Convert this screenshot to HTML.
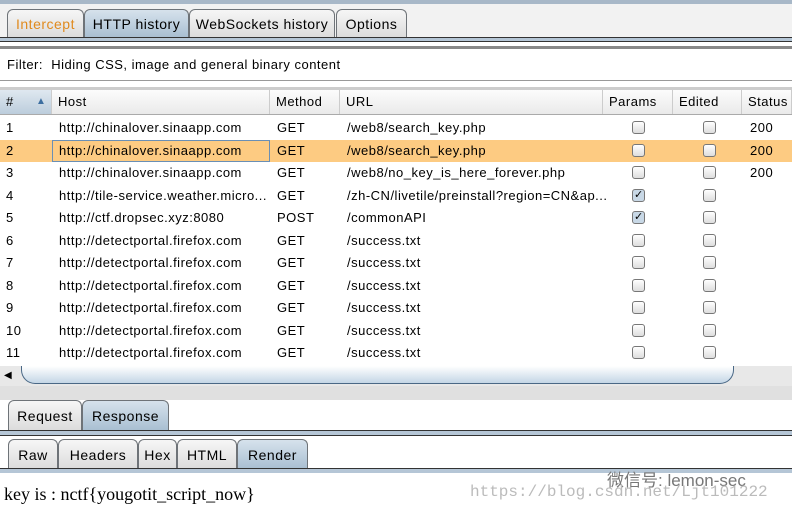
<!DOCTYPE html><html><head><style>
body{margin:0;width:792px;height:512px;background:#fff;font-family:"Liberation Sans",sans-serif;font-size:13px;letter-spacing:0.5px;color:#000;position:relative;overflow:hidden}
.a{position:absolute}
.tab{position:absolute;top:9px;height:28px;border:1px solid #6e7378;border-bottom:none;border-radius:6px 6px 0 0;background:linear-gradient(#f6f6f6,#dcdcdc);line-height:29px;text-align:center;font-size:14px;box-sizing:border-box}
.sel{background:linear-gradient(#d6e2ec,#a9bfd2)}
.row{position:absolute;left:0;width:792px;height:22px;line-height:22px}
.row span{position:absolute;white-space:nowrap}
.cb{position:absolute;width:11px;height:11px;border:1px solid #777;border-radius:3px;background:linear-gradient(#fff,#ddd);top:4px}
.hd{position:absolute;top:90px;height:24px;line-height:24px;border-right:1px solid #ccc;padding-left:6px;box-sizing:border-box;background:linear-gradient(#fcfcfc,#eaeaea)}
</style></head><body>
<div class="a" style="left:0;top:0;width:792px;height:4px;background:#a8b8c8"></div>
<div class="a" style="left:0;top:4px;width:792px;height:36px;background:#f2f2f2"></div>
<div class="tab" style="left:7px;width:77px;color:#e08a1e">Intercept</div>
<div class="tab sel" style="left:84px;width:105px">HTTP history</div>
<div class="tab" style="left:189px;width:146px">WebSockets history</div>
<div class="tab" style="left:336px;width:71px">Options</div>
<div class="a" style="left:0;top:37px;width:792px;height:5px;background:#b5c6d6;border-top:1px solid #333;border-bottom:1px solid #333;box-sizing:border-box"></div>
<div class="a" style="left:0;top:46px;width:792px;height:3px;background:#888"></div>
<div class="a" style="left:7px;top:57px;font-size:13px">Filter:&nbsp; Hiding CSS, image and general binary content</div>
<div class="a" style="left:0;top:80px;width:792px;height:1px;background:#999"></div>
<div class="a" style="left:0;top:87px;width:792px;height:3px;background:#ccc"></div>
<div class="hd" style="left:0;width:52px;background:linear-gradient(#dfe8f0,#bccddc)">#<span style="position:absolute;left:36px;top:0;color:#3c6ea0;font-size:10px">▲</span></div>
<div class="hd" style="left:52px;width:218px">Host</div>
<div class="hd" style="left:270px;width:70px">Method</div>
<div class="hd" style="left:340px;width:263px">URL</div>
<div class="hd" style="left:603px;width:70px">Params</div>
<div class="hd" style="left:673px;width:69px">Edited</div>
<div class="hd" style="left:742px;width:50px">Status</div>
<div class="a" style="left:0;top:114px;width:792px;height:1px;background:#aaa"></div>
<div id="rows"></div>
<div class="a" style="left:0;top:366px;width:792px;height:20px;background:#e8e8e8"></div>
<div class="a" style="left:4px;top:370px;font-size:10px">◀</div>
<div class="a" style="left:21px;top:366px;width:713px;height:18px;border:1px solid #4a6886;border-top:none;border-radius:0 0 14px 14px;background:linear-gradient(#fff,#c4d6e6);box-sizing:border-box"></div>
<div class="a" style="left:0;top:386px;width:792px;height:14px;background:#e0e0e0"></div>
<div class="tab" style="left:8px;top:400px;width:74px;height:30px;line-height:30px">Request</div>
<div class="tab sel" style="left:82px;top:400px;width:87px;height:30px;line-height:30px">Response</div>
<div class="a" style="left:0;top:430px;width:792px;height:6px;background:#b5c6d6;border-top:1px solid #333;border-bottom:1px solid #333;box-sizing:border-box"></div>
<div class="tab" style="left:8px;top:439px;width:50px;height:30px;line-height:30px">Raw</div>
<div class="tab" style="left:58px;top:439px;width:80px;height:30px;line-height:30px">Headers</div>
<div class="tab" style="left:138px;top:439px;width:39px;height:30px;line-height:30px">Hex</div>
<div class="tab" style="left:177px;top:439px;width:60px;height:30px;line-height:30px">HTML</div>
<div class="tab sel" style="left:237px;top:439px;width:71px;height:30px;line-height:30px">Render</div>
<div class="a" style="left:0;top:468px;width:792px;height:5px;background:#b5c6d6;border-top:1px solid #333;box-sizing:border-box"></div>
<div class="a" style="left:4px;top:484px;font-family:'Liberation Serif',serif;font-size:18px;letter-spacing:0">key is : nctf{yougotit_script_now}</div>
<div class="a" style="left:607px;top:466px;font-size:17px;color:#777;letter-spacing:0;font-family:'Liberation Sans','Noto Sans CJK SC',sans-serif">微信号: lemon-sec</div>
<div class="a" style="left:470px;top:483px;font-size:16px;color:#bbb;letter-spacing:0;font-family:'Liberation Mono',monospace">https://blog.csdn.net/Ljt101222</div>
<script>
var d=[["1","http://chinalover.sinaapp.com","GET","/web8/search_key.php",0,"200"],["2","http://chinalover.sinaapp.com","GET","/web8/search_key.php",0,"200"],["3","http://chinalover.sinaapp.com","GET","/web8/no_key_is_here_forever.php",0,"200"],["4","http://tile-service.weather.micro...","GET","/zh-CN/livetile/preinstall?region=CN&ap...",1,""],["5","http://ctf.dropsec.xyz:8080","POST","/commonAPI",1,""]];
for(var i=6;i<=11;i++)d.push([""+i,"http://detectportal.firefox.com","GET","/success.txt",0,""]);
var h="";d.forEach(function(r,k){var t=117+k*22.5;h+='<div class="row" style="top:'+t+'px;'+(k==1?'background:#fdcb82':'')+'">'+(k==1?'<div style="position:absolute;left:52px;top:0;width:216px;height:20px;border:1px solid #6a8fb5"></div>':'')+'<span style="left:6px">'+r[0]+'</span><span style="left:59px">'+r[1]+'</span><span style="left:277px">'+r[2]+'</span><span style="left:347px">'+r[3]+'</span><div class="cb" style="left:632px;'+(r[4]?'background:#c8d8e6':'')+'">'+(r[4]?'<span style="left:1px;top:-6px;font-size:11px">✓</span>':'')+'</div><div class="cb" style="left:703px"></div><span style="left:750px">'+r[5]+'</span></div>'});
document.getElementById("rows").innerHTML=h;
</script>
</body></html>
